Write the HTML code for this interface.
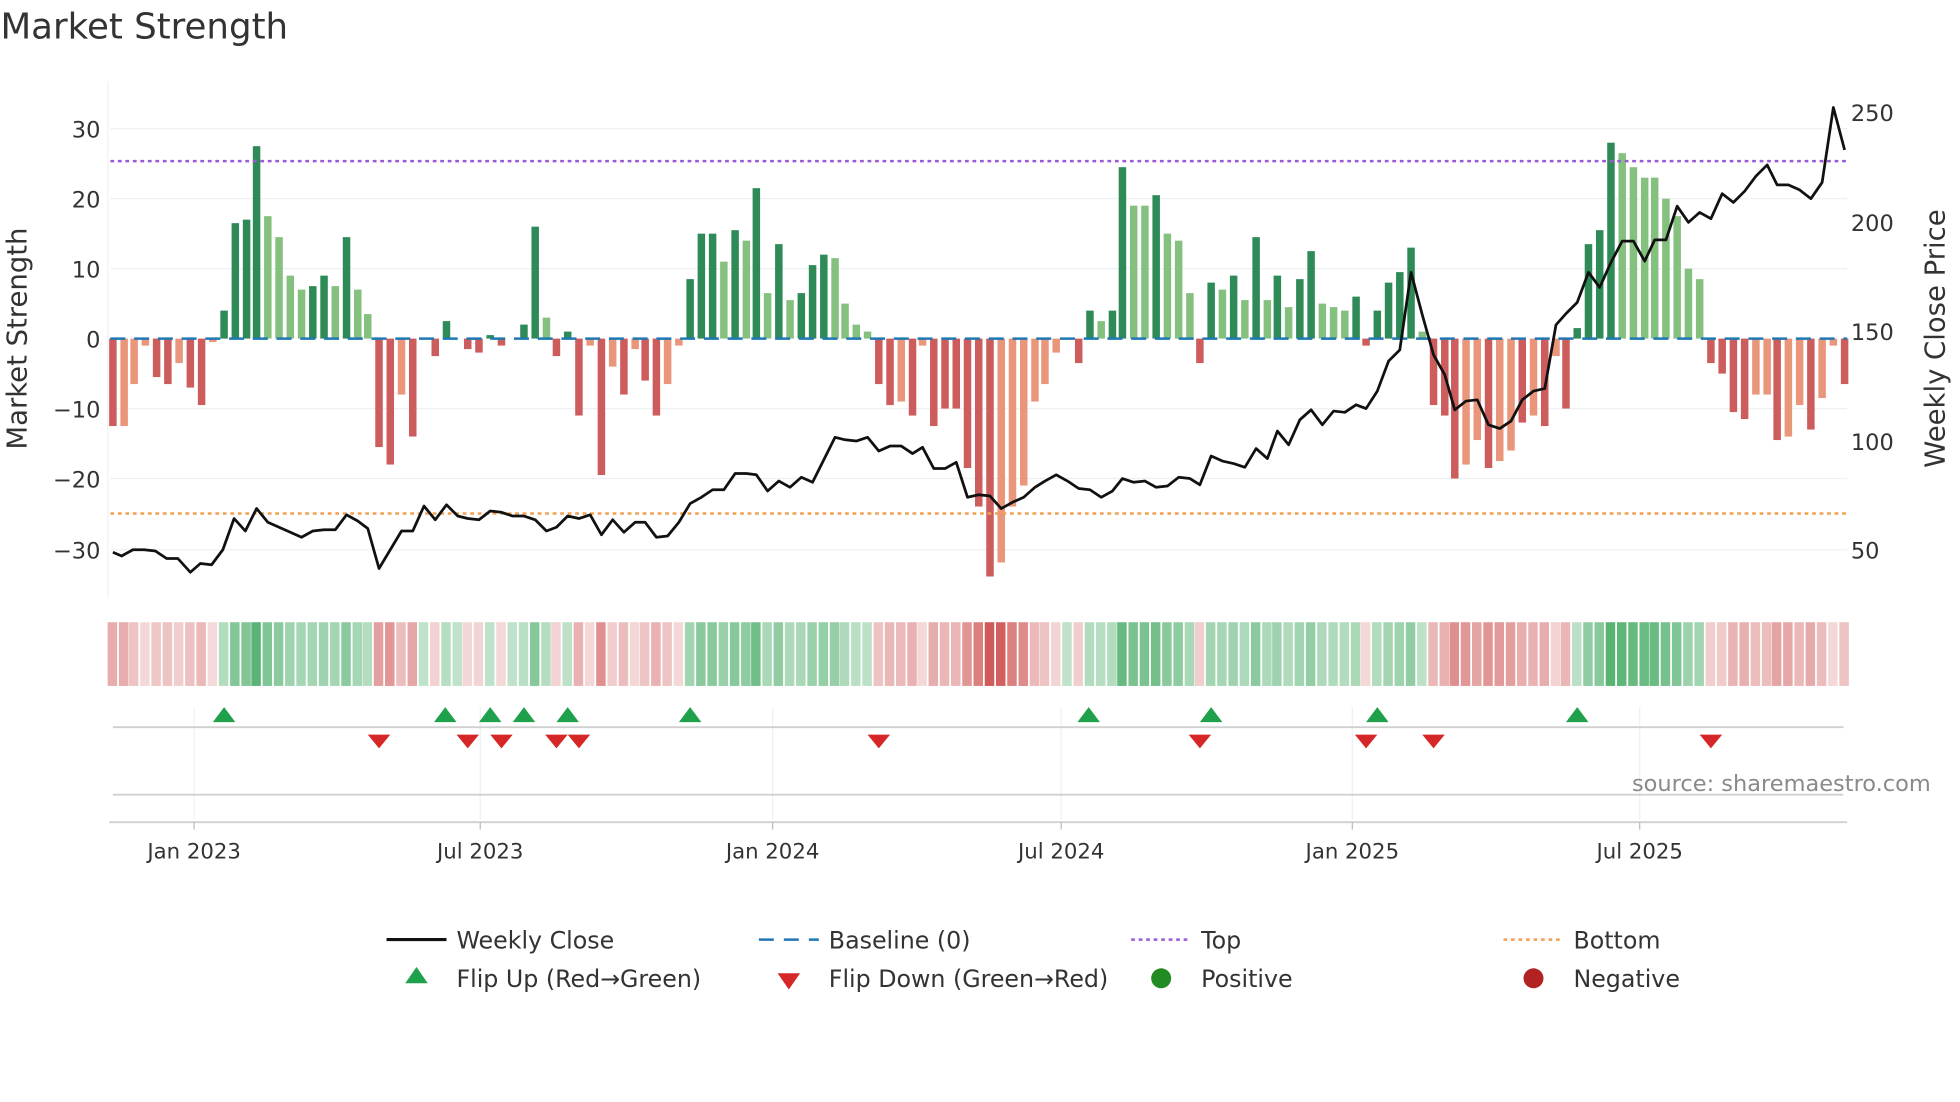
<!DOCTYPE html>
<html><head><meta charset="utf-8"><style>
html,body{margin:0;padding:0;background:#fff;width:1960px;height:1102px;overflow:hidden}
svg{display:block;font-family:"DejaVu Sans","Liberation Sans",sans-serif}
</style></head><body>
<svg id="s" width="1960" height="1102" viewBox="0 0 1568 882" xmlns="http://www.w3.org/2000/svg">
<text x="0" y="31" font-size="28.5" fill="#333">Market Strength</text>
<g stroke="#eef0f3" stroke-width="1">
<line x1="88" x2="1478" y1="103" y2="103"/><line x1="88" x2="1478" y1="159" y2="159"/><line x1="88" x2="1478" y1="215" y2="215"/><line x1="88" x2="1478" y1="327" y2="327"/><line x1="88" x2="1478" y1="383" y2="383"/><line x1="88" x2="1478" y1="440" y2="440"/>
<line x1="86" x2="86" y1="65" y2="478"/>
</g>
<g id="bars"></g>
<line x1="88" x2="1478" y1="271" y2="271" stroke="#1f77b4" stroke-width="2" stroke-dasharray="12,7"/>
<line x1="88" x2="1478" y1="129" y2="129" stroke="#9b59d6" stroke-width="2" stroke-dasharray="3,3"/>
<line x1="88" x2="1478" y1="411" y2="411" stroke="#f0a050" stroke-width="2" stroke-dasharray="3,3"/>
<polyline id="price" fill="none" stroke="#111" stroke-width="2.2" stroke-linejoin="round"/>
<g font-size="18" fill="#333" text-anchor="end">
<text x="80" y="110">30</text><text x="80" y="166">20</text><text x="80" y="222">10</text><text x="80" y="278">0</text><text x="80" y="334">−10</text><text x="80" y="390">−20</text><text x="80" y="447">−30</text>
</g>
<g font-size="18" fill="#333">
<text x="1481" y="97">250</text><text x="1481" y="185">200</text><text x="1481" y="272">150</text><text x="1481" y="360">100</text><text x="1481" y="447">50</text>
</g>
<text transform="translate(21,271) rotate(-90)" font-size="22" fill="#333" text-anchor="middle">Market Strength</text>
<text transform="translate(1556,271) rotate(-90)" font-size="22" fill="#333" text-anchor="middle">Weekly Close Price</text>
<g id="heat"></g>
<g stroke="#eef0f3"><line x1="155" x2="155" y1="566" y2="656"/><line x1="384" x2="384" y1="566" y2="656"/><line x1="618" x2="618" y1="566" y2="656"/><line x1="849" x2="849" y1="566" y2="656"/><line x1="1082" x2="1082" y1="566" y2="656"/><line x1="1312" x2="1312" y1="566" y2="656"/></g>
<line x1="90" x2="1475" y1="582" y2="582" stroke="#d0d0d0" stroke-width="1.5"/>
<line x1="90" x2="1475" y1="636" y2="636" stroke="#d0d0d0" stroke-width="1.5"/>
<line x1="87" x2="1478" y1="658" y2="658" stroke="#d0d0d0" stroke-width="1.5"/>
<g id="flips"></g>
<text x="1545" y="633" font-size="18" fill="#8a8a8a" text-anchor="end">source: sharemaestro.com</text>
<g stroke="#bbb"><line x1="155" x2="155" y1="658" y2="664"/><line x1="384" x2="384" y1="658" y2="664"/><line x1="618" x2="618" y1="658" y2="664"/><line x1="849" x2="849" y1="658" y2="664"/><line x1="1082" x2="1082" y1="658" y2="664"/><line x1="1312" x2="1312" y1="658" y2="664"/></g>
<g font-size="17" fill="#333" text-anchor="middle">
<text x="155" y="687">Jan 2023</text><text x="384" y="687">Jul 2023</text><text x="618" y="687">Jan 2024</text><text x="849" y="687">Jul 2024</text><text x="1082" y="687">Jan 2025</text><text x="1312" y="687">Jul 2025</text>
</g>
<g font-size="19" fill="#333">
<line x1="309" x2="357" y1="752" y2="752" stroke="#111" stroke-width="2.5"/><text x="365" y="759">Weekly Close</text>
<line x1="607" x2="655" y1="752" y2="752" stroke="#1f77b4" stroke-width="2" stroke-dasharray="12,8"/><text x="663" y="759">Baseline (0)</text>
<line x1="905" x2="953" y1="752" y2="752" stroke="#9b59d6" stroke-width="2" stroke-dasharray="3,3"/><text x="961" y="759">Top</text>
<line x1="1203" x2="1251" y1="752" y2="752" stroke="#f0a050" stroke-width="2" stroke-dasharray="3,3"/><text x="1259" y="759">Bottom</text>
<polygon points="333,774 342,787 324,787" fill="#1fa04a"/><text x="365" y="790">Flip Up (Red→Green)</text>
<polygon points="622,779 640,779 631,792" fill="#d62728"/><text x="663" y="790">Flip Down (Green→Red)</text>
<circle cx="929" cy="783" r="8" fill="#228b22"/><text x="961" y="790">Positive</text>
<circle cx="1227" cy="783" r="8" fill="#b22222"/><text x="1259" y="790">Negative</text>
</g>
</svg>
<script>
var B=[[90,-12.5,1],[99,-12.5,0],[107,-6.5,0],[116,-1,0],[125,-5.5,1],[134,-6.5,1],[143,-3.5,0],[152,-7,1],[161,-9.5,1],[170,-0.5,0],[179,4,1],[188,16.5,1],[197,17,1],[205,27.5,1],[214,17.5,0],[223,14.5,0],[232,9,0],[241,7,0],[250,7.5,1],[259,9,1],[268,7.5,0],[277,14.5,1],[286,7,0],[294,3.5,0],[303,-15.5,1],[312,-18,1],[321,-8,0],[330,-14,1],[339,0,0],[348,-2.5,1],[357,2.5,1],[366,0,0],[374,-1.5,1],[383,-2,1],[392,0.5,1],[401,-1,1],[410,0,0],[419,2,1],[428,16,1],[437,3,0],[445,-2.5,1],[454,1,1],[463,-11,1],[472,-1,0],[481,-19.5,1],[490,-4,0],[499,-8,1],[508,-1.5,0],[516,-6,1],[525,-11,1],[534,-6.5,0],[543,-1,0],[552,8.5,1],[561,15,1],[570,15,1],[579,11,0],[588,15.5,1],[597,14,0],[605,21.5,1],[614,6.5,0],[623,13.5,1],[632,5.5,0],[641,6.5,1],[650,10.5,1],[659,12,1],[668,11.5,0],[676,5,0],[685,2,0],[694,1,0],[703,-6.5,1],[712,-9.5,1],[721,-9,0],[730,-11,1],[738,-1,0],[747,-12.5,1],[756,-10,1],[765,-10,1],[774,-18.5,1],[783,-24,1],[792,-34,1],[801,-32,0],[810,-24,0],[819,-21,0],[828,-9,0],[836,-6.5,0],[845,-2,0],[854,0,0],[863,-3.5,1],[872,4,1],[881,2.5,0],[890,4,1],[898,24.5,1],[907,19,0],[916,19,0],[925,20.5,1],[934,15,0],[943,14,0],[952,6.5,0],[960,-3.5,1],[969,8,1],[978,7,0],[987,9,1],[996,5.5,0],[1005,14.5,1],[1014,5.5,0],[1022,9,1],[1031,4.5,0],[1040,8.5,1],[1049,12.5,1],[1058,5,0],[1067,4.5,0],[1076,4,0],[1085,6,1],[1093,-1,1],[1102,4,1],[1111,8,1],[1120,9.5,1],[1129,13,1],[1138,1,0],[1147,-9.5,1],[1156,-11,1],[1164,-20,1],[1173,-18,0],[1182,-14.5,0],[1191,-18.5,1],[1200,-17.5,0],[1209,-16,0],[1218,-12,1],[1227,-11,0],[1236,-12.5,1],[1245,-2.5,0],[1253,-10,1],[1262,1.5,1],[1271,13.5,1],[1280,15.5,1],[1289,28,1],[1298,26.5,0],[1307,24.5,0],[1316,23,0],[1324,23,0],[1333,20,0],[1342,17.5,0],[1351,10,0],[1360,8.5,0],[1369,-3.5,1],[1378,-5,1],[1387,-10.5,1],[1396,-11.5,1],[1405,-8,0],[1414,-8,0],[1422,-14.5,1],[1431,-14,0],[1440,-9.5,0],[1449,-13,1],[1458,-8.5,0],[1467,-1,0],[1476,-6.5,1]];
var ns="http://www.w3.org/2000/svg",bars=document.getElementById('bars'),heat=document.getElementById('heat');
function el(t,a,p){var e=document.createElementNS(ns,t);for(var k in a)e.setAttribute(k,a[k]);p.appendChild(e);}
B.forEach(function(b){var x=b[0],v=b[1],h=Math.abs(v)*5.6;var c=v>=0?(b[2]?'#2e8b57':'#85c17e'):(b[2]?'#cd5c5c':'#e9967a');
if(h>0)el('rect',{x:x-3,y:v>=0?271-h:271,width:6,height:h,fill:c},bars);
var a=Math.min(Math.abs(v),34)/34;var hc=v>=0?'rgba(46,160,80,'+(0.3+a*0.6)+')':'rgba(205,80,80,'+(0.2+a*0.75)+')';
el('rect',{x:x-4.2,y:498,width:7.6,height:51,fill:hc},heat);});
var P=[[90,442],[97,445],[106,440],[115,440],[124,441],[133,447],[142,447],[152,458],[160,451],[169,452],[178,440],[187,415],[196,425],[205,407],[214,418],[223,422],[232,426],[241,430],[250,425],[259,424],[268,424],[277,412],[286,417],[294,423],[303,455],[312,440],[321,425],[330,425],[339,405],[348,416],[357,404],[366,413],[374,415],[383,416],[392,409],[401,410],[410,413],[419,413],[428,416],[437,425],[445,422],[454,413],[463,415],[472,412],[481,428],[490,416],[499,426],[508,418],[516,418],[525,430],[534,429],[543,418],[552,403],[561,398],[570,392],[579,392],[588,379],[597,379],[605,380],[614,393],[623,385],[632,390],[641,382],[650,386],[659,368],[668,350],[676,352],[685,353],[694,350],[703,361],[712,357],[721,357],[730,363],[738,358],[747,375],[756,375],[765,370],[774,398],[783,396],[792,397],[801,407],[810,402],[819,398],[828,390],[836,385],[845,380],[854,385],[863,391],[872,392],[881,398],[890,393],[898,383],[907,386],[916,385],[925,390],[934,389],[943,382],[952,383],[960,388],[969,365],[978,369],[987,371],[996,374],[1005,359],[1014,367],[1022,345],[1031,356],[1040,336],[1049,328],[1058,340],[1067,329],[1076,330],[1085,324],[1093,327],[1102,313],[1111,289],[1120,280],[1129,218],[1138,252],[1147,284],[1156,300],[1164,328],[1173,321],[1182,320],[1191,340],[1200,343],[1209,337],[1218,320],[1227,313],[1236,311],[1245,260],[1253,251],[1262,242],[1271,218],[1280,230],[1289,210],[1298,193],[1307,193],[1316,209],[1324,192],[1333,192],[1342,165],[1351,178],[1360,170],[1369,175],[1378,155],[1387,162],[1396,153],[1405,141],[1414,132],[1422,148],[1431,148],[1440,152],[1449,159],[1458,146],[1467,86],[1476,120]];
document.getElementById('price').setAttribute('points',P.map(function(p){return p.join(',')}).join(' '));
var f=document.getElementById('flips');
[179,356,392,419,454,552,871,969,1102,1262].forEach(function(x){el('polygon',{points:x+',566 '+(x+9)+',578 '+(x-9)+',578',fill:'#1fa04a'},f);});
[303,374,401,445,463,703,960,1093,1147,1369].forEach(function(x){el('polygon',{points:(x-9)+',588 '+(x+9)+',588 '+x+',599',fill:'#d62728'},f);});
</script>
</body></html>
